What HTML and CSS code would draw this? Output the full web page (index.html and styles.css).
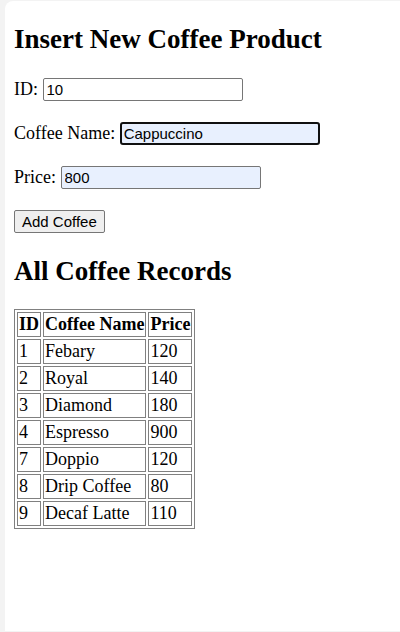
FILE: index.html
```html
<!DOCTYPE html>
<html lang="en">

<head>
  <meta charset="UTF-8">
  <meta name="viewport" content="width=device-width, initial-scale=1.0">
  <title>Coffee Products</title>
  <link rel="stylesheet" href="styles.css">
</head>

<body>
  <div class="page">
    <section>
      <h1>Insert New Coffee Product</h1>
      <form action="#" method="post">
        <p>ID: <input type="text" name="id" value="10"></p>
        <p>Coffee Name: <input type="text" name="name" class="filled focused" value="Cappuccino"></p>
        <p>Price: <input type="text" name="price" class="filled" value="800"></p>
        <p><button type="submit">Add Coffee</button></p>
      </form>
    </section>

    <h2>All Coffee Records</h2>
    <table class="records">
      <tr>
        <th>ID</th>
        <th>Coffee Name</th>
        <th>Price</th>
      </tr>
      <tr><td>1</td><td>Febary</td><td>120</td></tr>
      <tr><td>2</td><td>Royal</td><td>140</td></tr>
      <tr><td>3</td><td>Diamond</td><td>180</td></tr>
      <tr><td>4</td><td>Espresso</td><td>900</td></tr>
      <tr><td>7</td><td>Doppio</td><td>120</td></tr>
      <tr><td>8</td><td>Drip Coffee</td><td>80</td></tr>
      <tr><td>9</td><td>Decaf Latte</td><td>110</td></tr>
    </table>
  </div>
</body>

</html>
```

FILE: styles.css
```css
html {
  background-color: #f3f3f3;
}

body {
  margin: 0;
  font-family: "Liberation Serif", "Times New Roman", serif;
  font-size: 18px;
  color: #000;
}

.page {
  margin: 1px 0 0 5px;
  padding: 1px 9px 9px 9px;
  min-height: 620px;
  background-color: #fff;
  border-top-left-radius: 8px;
}

h1,
h2 {
  font-size: 27px;
  font-weight: bold;
  margin: 22px 0;
}

h1 {
  margin-bottom: 21px;
}

p {
  margin: 18px 0;
  line-height: 26px;
}

input {
  box-sizing: border-box;
  width: 200px;
  height: 23px;
  padding: 1px 3px;
  border: 1px solid #767676;
  border-radius: 2px;
  font-family: "Liberation Sans", Arial, sans-serif;
  font-size: 15px;
  color: #000;
  background-color: #fff;
}

input.filled {
  background-color: #e8f0fe;
}

input.focused {
  border: 2px solid #101010;
  border-radius: 3px;
  padding: 0 2px;
  outline: none;
}

button {
  height: 23px;
  padding: 1px 7px;
  border: 1px solid #767676;
  border-radius: 2px;
  background-color: #efefef;
  font-family: "Liberation Sans", Arial, sans-serif;
  font-size: 15px;
  line-height: normal;
  color: #000;
}

/* table with border="1" look */
.records {
  margin-top: 2px;
  border: 1px solid #808080;
  border-spacing: 2px;
}

.records th,
.records td {
  border: 1px solid #808080;
  padding: 1px;
  line-height: 21px;
  text-align: left;
}

.records th {
  text-align: center;
}
```
